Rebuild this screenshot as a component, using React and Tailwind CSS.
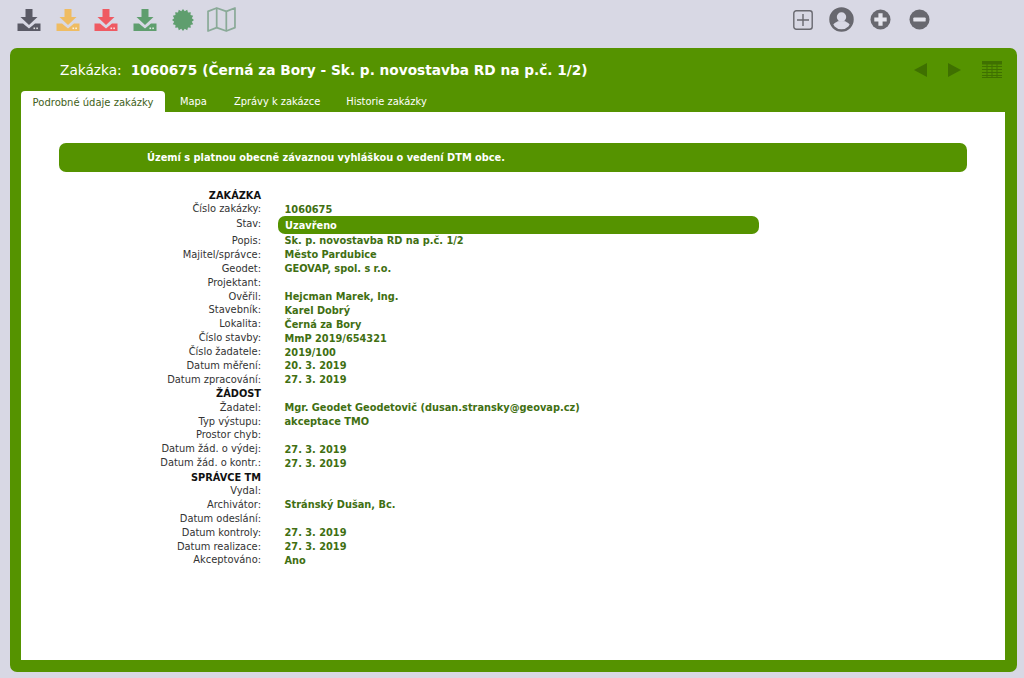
import React from 'react';

const sections = [
  { title: 'ZAKÁZKA', rows: [
    ['Číslo zakázky:', '1060675'],
    ['Stav:', 'Uzavřeno', true],
    ['Popis:', 'Sk. p. novostavba RD na p.č. 1/2'],
    ['Majitel/správce:', 'Město Pardubice'],
    ['Geodet:', 'GEOVAP, spol. s r.o.'],
    ['Projektant:', ''],
    ['Ověřil:', 'Hejcman Marek, Ing.'],
    ['Stavebník:', 'Karel Dobrý'],
    ['Lokalita:', 'Černá za Bory'],
    ['Číslo stavby:', 'MmP 2019/654321'],
    ['Číslo žadatele:', '2019/100'],
    ['Datum měření:', '20. 3. 2019'],
    ['Datum zpracování:', '27. 3. 2019'],
  ]},
  { title: 'ŽÁDOST', rows: [
    ['Žadatel:', 'Mgr. Geodet Geodetovič (dusan.stransky@geovap.cz)'],
    ['Typ výstupu:', 'akceptace TMO'],
    ['Prostor chyb:', ''],
    ['Datum žád. o výdej:', '27. 3. 2019'],
    ['Datum žád. o kontr.:', '27. 3. 2019'],
  ]},
  { title: 'SPRÁVCE TM', rows: [
    ['Vydal:', ''],
    ['Archivátor:', 'Stránský Dušan, Bc.'],
    ['Datum odeslání:', ''],
    ['Datum kontroly:', '27. 3. 2019'],
    ['Datum realizace:', '27. 3. 2019'],
    ['Akceptováno:', 'Ano'],
  ]},
];

function DownloadIcon({ color }) {
  return (
    <svg width="24" height="24" viewBox="0 0 24 24" fill={color}>
      <path d="M8.500 1h7v8h5L12 17 3.500 9h5z" />
      <path d="M0.500 15.500h5.500l6 5 6-5h5.500v7.500h-23z" />
      <rect x="16.500" y="19.500" width="1.600" height="1.600" fill="#fff" opacity="0.8" />
      <rect x="19.300" y="19.500" width="1.600" height="1.600" fill="#fff" opacity="0.8" />
    </svg>
  );
}

function Badge() {
  const points = [];
  for (let i = 0; i < 32; i++) {
    const r = i % 2 === 0 ? 11 : 9;
    const a = (i * Math.PI) / 16;
    points.push(`${11 + r * Math.cos(a)},${11 + r * Math.sin(a)}`);
  }
  return (
    <svg width="22" height="22" viewBox="0 0 22 22">
      <polygon points={points.join(' ')} fill="#5f9e6e" />
    </svg>
  );
}

function MapIcon() {
  return (
    <svg width="29" height="25" viewBox="0 0 30 26" fill="none" stroke="#8aaa98" strokeWidth="1.800" strokeLinejoin="round">
      <path d="M1 4.500l9-3.500 10 3.500 9-3.500v20.500l-9 3.500-10-3.500-9 3.500z" />
      <path d="M10 1v20.500M20 4.500v20.500" />
    </svg>
  );
}

function RoundIcon({ minus }) {
  return (
    <svg width="21" height="21" viewBox="0 0 22 22">
      <circle cx="11" cy="11" r="10.500" fill="#68686f" />
      {minus
        ? <rect x="4.500" y="8.800" width="13" height="4.400" rx="1" fill="#e4e4ec" />
        : <path d="M8.800 4.500h4.400v4.300h4.300v4.400h-4.300v4.300h-4.400v-4.300h-4.300v-4.400h4.300z" fill="#e4e4ec" />}
    </svg>
  );
}

function UserIcon() {
  return (
    <svg width="25" height="25" viewBox="0 0 25 25">
      <circle cx="12.500" cy="12.500" r="11" fill="#d8d8e4" stroke="#68686f" strokeWidth="2.500" />
      <path d="M12.500 1.500a11 11 0 0 1 9 17.300c-1.200-2.800-4-4.300-9-4.300s-7.800 1.500-9 4.300a11 11 0 0 1 9-17.300z" fill="#68686f" />
      <circle cx="12.500" cy="10" r="4.700" fill="#d8d8e4" />
      <path d="M7.500 14.300q5 3.500 10 0" fill="#d8d8e4" />
    </svg>
  );
}

function SquarePlus() {
  return (
    <svg width="20" height="20" viewBox="0 0 20 20" fill="none" stroke="#68686f" strokeWidth="1.400">
      <rect x="0.800" y="0.800" width="18.400" height="18.400" rx="2.500" />
      <path d="M10 4v12M4 10h12" />
    </svg>
  );
}

function Row({ label, value, status }) {
  return (
    <div className={status ? 'flex h-[18px]' : 'flex h-[13.900px] items-center'}>
      <div className={`w-[240px] shrink-0 text-right text-[9.900px] text-[#333] ${status ? 'leading-[13.900px]' : 'mt-[-0.600px]'}`}>{label}</div>
      {status ? (
        <div className="ml-[17px] mt-[-1px] h-[18px] w-[481px] rounded-[7px] bg-[#559300] pl-[7px] text-[9.800px] font-bold leading-[19px] text-white">{value}</div>
      ) : (
        <div className="ml-[23.500px] text-[9.800px] font-bold text-[#416f12]">{value}</div>
      )}
    </div>
  );
}

export default function App() {
  return (
    <div className="flex h-[678px] flex-col overflow-hidden bg-[#d8d8e4] font-['DejaVu_Sans','Liberation_Sans',sans-serif] text-[10px]">
      {/* toolbar */}
      <div className="flex h-[48px] shrink-0 items-start justify-between pl-[17px] pr-[94px] pt-[7px]">
        <div className="flex items-center">
          <div className="flex items-center gap-[14.500px]">
            <DownloadIcon color="#5a5a66" />
            <DownloadIcon color="#efbc62" />
            <DownloadIcon color="#ef5a62" />
            <DownloadIcon color="#5f9e6e" />
          </div>
          <div className="ml-[15px]"><Badge /></div>
          <div className="ml-[13px]"><MapIcon /></div>
        </div>
        <div className="flex items-center">
          <SquarePlus />
          <div className="ml-[16px]"><UserIcon /></div>
          <div className="ml-[16px]"><RoundIcon /></div>
          <div className="ml-[18px]"><RoundIcon minus /></div>
        </div>
      </div>

      {/* main panel */}
      <div className="mb-[6px] ml-[10px] mr-[7px] flex flex-1 flex-col rounded-[7px] bg-[#559300] pb-[12px] pl-[11px] pr-[12px]">
        <div className="flex h-[43px] shrink-0 items-center justify-between pl-[39px] pr-[3px]">
          <div className="pt-[1px] text-[13.700px] text-white">
            <span>Zakázka:</span>
            <span className="ml-[9px] font-bold">1060675 (Černá za Bory - Sk. p. novostavba RD na p.č. 1/2)</span>
          </div>
          <div className="flex items-center">
            <svg width="13" height="14" viewBox="0 0 13 14" fill="#3f7000"><path d="M13 0v14L0 7z" /></svg>
            <svg className="ml-[21px]" width="13" height="14" viewBox="0 0 13 14" fill="#3f7000"><path d="M0 0v14l13-7z" /></svg>
            <svg className="ml-[21px]" width="20" height="17" viewBox="0 0 20 17" fill="#3f7000">
              <path d="M0 0h20v3.500h-20zM0 5h20v1h-20zM0 8h20v1h-20zM0 11h20v1h-20zM0 14h20v1h-20zM0 16h20v1h-20zM4.500 3h1v14h-1zM9.500 3h1v14h-1zM14.500 3h1v14h-1z" />
            </svg>
          </div>
        </div>

        <div className="flex h-[21px] shrink-0 items-start text-[9.900px]">
          <div className="flex h-[21px] w-[144px] items-center justify-center rounded-t-[4px] bg-white pt-[1px] text-[10px] text-[#3f5f20]">Podrobné údaje zakázky</div>
          <div className="ml-[15px] flex h-[21px] items-center pt-[1px] text-white">Mapa</div>
          <div className="ml-[27px] flex h-[21px] items-center pt-[1px] text-white">Zprávy k zakázce</div>
          <div className="ml-[26px] flex h-[21px] items-center pt-[1px] text-white">Historie zakázky</div>
        </div>

        <div className="flex-1 bg-white pl-[38px] pr-[38px] pt-[31px]">
          <div className="flex h-[29px] w-[908px] items-center rounded-[7px] bg-[#559300] pl-[88px] pt-[1px] text-[9.800px] font-bold text-white">
            Území s platnou obecně závaznou vyhláškou o vedení DTM obce.
          </div>
          <div className="ml-[-38px] mt-[17px]">
            {sections.map((s) => (
              <div key={s.title}>
                <div className="flex h-[13.900px] w-[240px] items-center justify-end text-[9.800px] font-bold text-[#111]">{s.title}</div>
                {s.rows.map((r) => (
                  <Row key={r[0]} label={r[0]} value={r[1]} status={r[2]} />
                ))}
              </div>
            ))}
          </div>
        </div>
      </div>
    </div>
  );
}
